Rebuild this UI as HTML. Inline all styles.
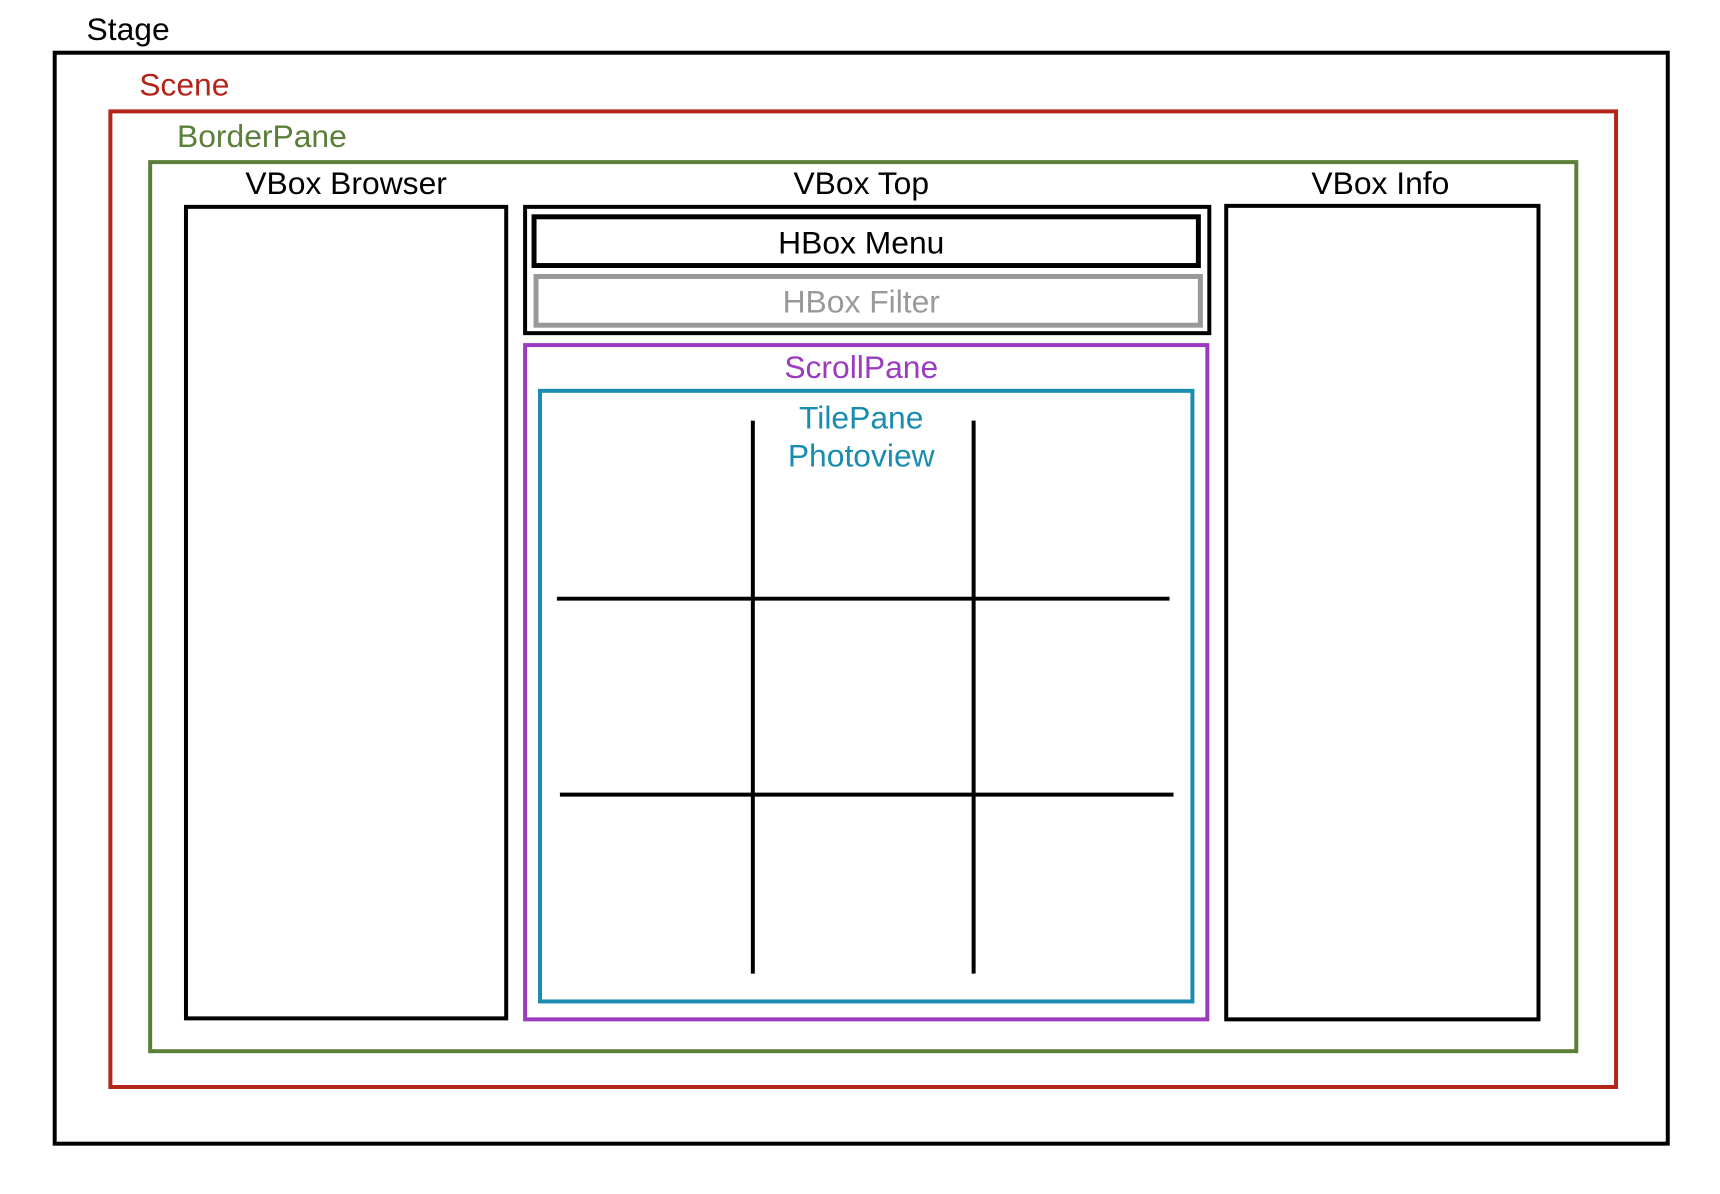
<!DOCTYPE html>
<html><head><meta charset="utf-8"><style>
html,body{margin:0;padding:0;background:#fff;width:1720px;height:1194px;overflow:hidden}
svg text{font-family:"Liberation Sans",Arial,sans-serif;font-size:32px}
</style></head><body>
<svg width="1720" height="1194" viewBox="0 0 1720 1194" xmlns="http://www.w3.org/2000/svg">
<rect x="0" y="0" width="1720" height="1194" fill="#fff"/>
<g transform="scale(0.9945)">
<g fill="none">
<rect x="55" y="53" width="1622" height="1097" stroke="#000" stroke-width="4"/>
<rect x="111" y="112" width="1514" height="981" stroke="#b32519" stroke-width="4"/>
<rect x="151" y="163" width="1434" height="894" stroke="#5b7f39" stroke-width="4"/>
<rect x="187" y="208" width="322" height="816" stroke="#000" stroke-width="4"/>
<rect x="528" y="208" width="688" height="127" stroke="#000" stroke-width="4"/>
<rect x="537" y="218" width="668" height="49" stroke="#000" stroke-width="5"/>
<rect x="539" y="278" width="668" height="49" stroke="#999" stroke-width="5"/>
<rect x="528" y="347" width="686" height="678" stroke="#9b3cc0" stroke-width="4"/>
<rect x="543" y="393" width="656" height="614" stroke="#1a8cb0" stroke-width="4"/>
<rect x="1233" y="207" width="314" height="818" stroke="#000" stroke-width="4"/>
<g stroke="#000" stroke-width="4">
<line x1="757" y1="423" x2="757" y2="979"/>
<line x1="979" y1="423" x2="979" y2="979"/>
<line x1="560" y1="602" x2="1176" y2="602"/>
<line x1="563" y1="799" x2="1180" y2="799"/>
</g>
</g>
<text x="87" y="40" fill="#000">Stage</text>
<text x="140" y="96" fill="#b32519">Scene</text>
<text x="178" y="148" fill="#5b7f39">BorderPane</text>
<text x="348" y="195" text-anchor="middle" fill="#000">VBox Browser</text>
<text x="866" y="195" text-anchor="middle" fill="#000">VBox Top</text>
<text x="1388" y="195" text-anchor="middle" fill="#000">VBox Info</text>
<text x="866" y="255" text-anchor="middle" fill="#000">HBox Menu</text>
<text x="866" y="314" text-anchor="middle" fill="#999">HBox Filter</text>
<text x="866" y="380" text-anchor="middle" fill="#9b3cc0">ScrollPane</text>
<text x="866" y="431" text-anchor="middle" fill="#1a8cb0">TilePane</text>
<text x="866" y="469" text-anchor="middle" fill="#1a8cb0">Photoview</text>
</g>
</svg>
</body></html>
